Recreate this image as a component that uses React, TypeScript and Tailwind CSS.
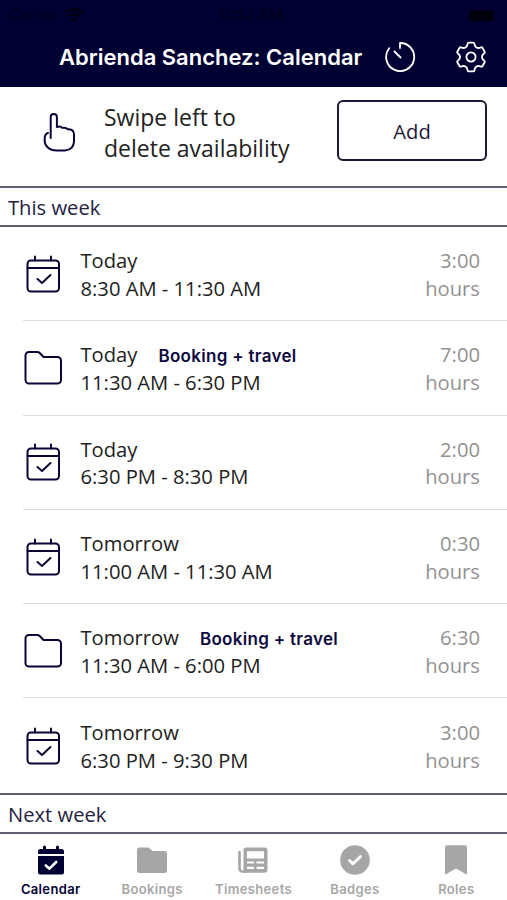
import React from 'react';

type Slot = {
  id: number;
  day: string;
  time: string;
  hours: string;
  booking?: boolean;
};

const slots: Slot[] = [
  { id: 1, day: 'Today', time: '8:30 AM - 11:30 AM', hours: '3:00' },
  { id: 2, day: 'Today', time: '11:30 AM - 6:30 PM', hours: '7:00', booking: true },
  { id: 3, day: 'Today', time: '6:30 PM - 8:30 PM', hours: '2:00' },
  { id: 4, day: 'Tomorrow', time: '11:00 AM - 11:30 AM', hours: '0:30' },
  { id: 5, day: 'Tomorrow', time: '11:30 AM - 6:00 PM', hours: '6:30', booking: true },
  { id: 6, day: 'Tomorrow', time: '6:30 PM - 9:30 PM', hours: '3:00' },
];

const CalendarIcon = () => (
  <svg width="40" height="40" viewBox="0 0 40 40" fill="none" stroke="currentColor" strokeWidth="2" strokeLinecap="round" strokeLinejoin="round">
    <rect x="4.500" y="6.500" width="31.500" height="31" rx="3.500" />
    <path d="M4.500 14h31.500M12 6.500V2.500M28 6.500V2.500" />
    <path d="M14.500 25l4.500 4 8.500-8" />
  </svg>
);

const FolderIcon = () => (
  <svg width="40" height="40" viewBox="0 0 40 40" fill="none" stroke="currentColor" strokeWidth="2" strokeLinejoin="round">
    <path d="M2.500 7.500A3.500 3.500 0 0 1 6 4h8c1.400 0 2.200.4 3 1.200L20.500 9H34.500a3.500 3.500 0 0 1 3.500 3.500V32a3.500 3.500 0 0 1-3.500 3.500H6A3.500 3.500 0 0 1 2.500 32z" />
  </svg>
);

const PointerIcon = () => (
  <svg width="34" height="42" viewBox="0 0 34 42" fill="none" stroke="currentColor" strokeWidth="2" strokeLinecap="round" strokeLinejoin="round">
    <path d="M7.700 27V6a3.100 3.100 0 0 1 6.200 0v10c2.200-.8 4.300-.4 5.400.9 2-.5 4.200 0 5.400 1.300 3-.4 6.300 1.300 6.300 4.800v7c0 6-3.500 9-9 9.500h-8.500C6 39.500 1.700 34.500 1.700 30v-2.500c0-3 1.300-4.900 3.300-5.500" />
  </svg>
);

const TimerIcon = () => (
  <svg width="32" height="32" viewBox="0 0 32 32" fill="none" stroke="currentColor" strokeWidth="1.800" strokeLinecap="round" strokeLinejoin="round">
    <path d="M16 7V2a14 14 0 1 1-10.800 5.300M10.500 10.500l6 6" />
  </svg>
);

const GearIcon = () => (
  <svg width="32" height="32" viewBox="-16 -16 32 32" fill="none" stroke="currentColor" strokeWidth="1.800" strokeLinejoin="round">
    <path d="M-2.300-14.300H2.300Q3.200-14.300 3.350-13.500L3.700-12Q4-10.500 5.500-9.500Q7.100-8.700 8.500-9.200L10.100-9.700Q11-10 11.400-9.200L13.700-5.300Q14.200-4.500 13.400-3.900L12.200-2.800Q11-1.800 11 0Q11 1.800 12.200 2.800L13.400 3.900Q14.200 4.500 13.700 5.300L11.400 9.200Q11 10 10.100 9.700L8.500 9.200Q7.100 8.700 5.500 9.500Q4 10.500 3.700 12L3.350 13.500Q3.200 14.300 2.300 14.300H-2.300Q-3.200 14.300-3.350 13.500L-3.700 12Q-4 10.500-5.500 9.500Q-7.100 8.700-8.500 9.200L-10.100 9.700Q-11 10-11.400 9.200L-13.700 5.300Q-14.200 4.500-13.400 3.900L-12.200 2.800Q-11 1.800-11 0Q-11-1.800-12.200-2.800L-13.400-3.900Q-14.200-4.500-13.700-5.300L-11.400-9.200Q-11-10-10.100-9.700L-8.500-9.200Q-7.100-8.700-5.500-9.500Q-4-10.500-3.700-12L-3.350-13.500Q-3.200-14.300-2.300-14.300z" />
    <circle r="4.600" />
  </svg>
);

const CalendarTabIcon = () => (
  <svg width="30" height="30" viewBox="0 0 30 30" fill="none">
    <path d="M2 9V6.500A2.500 2.500 0 0 1 4.500 4H7V2a1.500 1.500 0 0 1 3 0v2h10V2a1.500 1.500 0 0 1 3 0v2h2.500A2.500 2.500 0 0 1 28 6.500V9zM2 11h26v16.500a2 2 0 0 1-2 2H4a2 2 0 0 1-2-2z" fill="currentColor" />
    <path d="M9.800 20.500l3.700 3.200 6.700-6.700" stroke="white" strokeWidth="2.600" strokeLinecap="round" strokeLinejoin="round" />
  </svg>
);

const FolderTabIcon = () => (
  <svg width="30" height="30" viewBox="0 0 30 30" fill="currentColor">
    <path d="M0 5a2.500 2.500 0 0 1 2.500-2.500h9L15.500 6h12A2.500 2.500 0 0 1 30 8.500v17a2.500 2.500 0 0 1-2.500 2.500h-25A2.500 2.500 0 0 1 0 25.500z" />
  </svg>
);

const TimesheetIcon = () => (
  <svg width="30" height="30" viewBox="0 0 30 30" fill="currentColor">
    <path d="M1.500 7v16.500a3 3 0 0 0 3 3H8" fill="none" stroke="currentColor" strokeWidth="2.600" strokeLinecap="round" />
    <path
      fillRule="evenodd"
      d="M8 2.500h18.500A3 3 0 0 1 29.500 5.500v19.300a3 3 0 0 1-3 3H5.500V5A2.500 2.500 0 0 1 8 2.500zM9 6.200v7.300h17V6.200zM9 16.500v2h7v-2zM18.500 16.500v2H26v-2zM9 21.800v2.200h7v-2.200zM18.500 21.800v2.200H26v-2.200z"
    />
  </svg>
);

const BadgeIcon = () => (
  <svg width="30" height="30" viewBox="0 0 30 30" fill="none">
    <circle cx="15" cy="15" r="14.800" fill="currentColor" />
    <path d="M9.500 15.500l3.500 3.300 7.500-7.300" stroke="white" strokeWidth="3" strokeLinecap="round" strokeLinejoin="round" />
  </svg>
);

const BookmarkIcon = () => (
  <svg width="30" height="30" viewBox="0 0 30 30" fill="currentColor">
    <path d="M4 2.500A2.300 2.300 0 0 1 6.300.2h17.400A2.300 2.300 0 0 1 26 2.500v27.300l-11-6.300-11 6.300z" />
  </svg>
);

const tabs = [
  { label: 'Calendar', icon: <CalendarTabIcon />, active: true },
  { label: 'Bookings', icon: <FolderTabIcon /> },
  { label: 'Timesheets', icon: <TimesheetIcon /> },
  { label: 'Badges', icon: <BadgeIcon /> },
  { label: 'Roles', icon: <BookmarkIcon /> },
];

const WeekHeading = ({ title }: { title: string }) => (
  <div className="flex h-[41px] items-center border-y-2 border-[#605d75] pt-px pl-2 text-[20.2px] text-[#262244]">
    {title}
  </div>
);

const SlotRow = ({ slot, last }: { slot: Slot; last: boolean }) => (
  <div className="flex h-[94.3px] pl-[23px]">
    <div className={`flex flex-1 items-center pt-[2px] pr-[27px] ${last ? '' : 'border-b border-[#dcdcdc]'}`}>
      <div className="w-[57.5px] pb-[2px] text-[#0a0638]">{slot.booking ? <FolderIcon /> : <CalendarIcon />}</div>
      <div className="flex-1 text-[20.2px] leading-[27.5px] whitespace-nowrap text-[#222222]">
        <div className="flex h-[27.5px] items-center gap-[21px]">
          <span>{slot.day}</span>
          {slot.booking && (
            <span className="pt-1 font-['Inter',sans-serif] text-[17px] font-semibold tracking-[0.3px] text-[#0d0940]">Booking + travel</span>
          )}
        </div>
        <div>{slot.time}</div>
      </div>
      <div className="text-right text-[20.2px] leading-[27.5px] text-[#929292]">
        <div>{slot.hours}</div>
        <div>hours</div>
      </div>
    </div>
  </div>
);

export default function App() {
  return (
    <div className="flex h-[900px] w-[507px] flex-col overflow-hidden bg-white font-['Open_Sans',sans-serif]">
      {/* Status bar and title */}
      <header className="h-[87px] shrink-0 bg-[#000033]">
        <div className="grid h-[30px] grid-cols-3 items-center pr-[13px] pl-[9px] font-['Inter',sans-serif] text-[15px] text-[#00001c]">
          <div className="flex items-center gap-1.5">
            <span>Carrier</span>
            <svg width="20" height="15" viewBox="0 0 20 15" fill="none" stroke="#00000f" strokeWidth="2.500">
              <path d="M1 5a13 13 0 0 1 18 0M4 8.500a9 9 0 0 1 12 0" />
              <path d="M7 11a4.500 4.500 0 0 1 6 0l-3 3z" fill="#00000f" stroke="none" />
            </svg>
          </div>
          <span className="text-center font-semibold">11:22 AM</span>
          <div className="h-[11px] w-[25px] justify-self-end rounded-[3px] bg-[#00000c]" />
        </div>
        <div className="flex h-[54px] items-center pl-[59px] text-white">
          <h1 className="w-[325px] pt-px font-['Inter',sans-serif] text-[22px] font-semibold whitespace-nowrap">Abrienda Sanchez: Calendar</h1>
          <TimerIcon />
          <div className="ml-[39px]"><GearIcon /></div>
        </div>
      </header>

      <section className="flex h-[99px] shrink-0 pl-[43px] text-[#0a0638]">
        <div className="w-[61px] pt-[24px]"><PointerIcon /></div>
        <p className="w-[233px] pt-[15px] text-[23px] leading-[31px] text-[#222222]">
          Swipe left to<br />delete availability
        </p>
        <button className="mt-[13px] h-[61px] w-[150px] rounded-md border-2 border-[#1c1836] pt-px text-[20.2px] text-[#1c1836]">Add</button>
      </section>

      <WeekHeading title="This week" />
      <main>
        {slots.map((slot, i) => (
          <SlotRow key={slot.id} slot={slot} last={i === slots.length - 1} />
        ))}
      </main>
      <WeekHeading title="Next week" />

      <nav className="grid flex-1 grid-cols-5 font-['Inter',sans-serif]">
        {tabs.map(tab => (
          <div key={tab.label} className={`flex flex-col items-center pt-2 ${tab.active ? 'text-[#000033]' : 'text-[#a6a6a6]'}`}>
            <div className="flex h-[36px] items-center">{tab.icon}</div>
            <span className="mt-[3px] text-[13px] leading-4 font-semibold tracking-[0.35px]">{tab.label}</span>
          </div>
        ))}
      </nav>
    </div>
  );
}
